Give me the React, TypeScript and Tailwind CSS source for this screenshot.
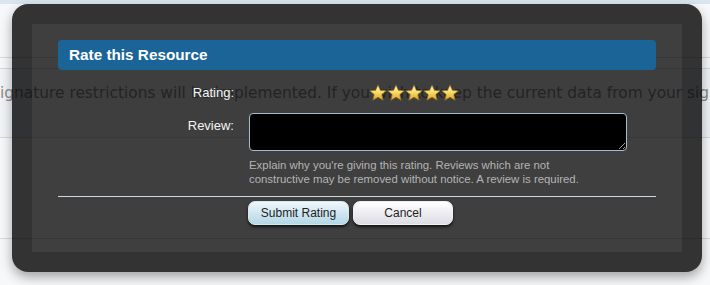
import React from 'react';

function Star() {
  return (
    <svg width="18" height="18" viewBox="0 0 24 24">
      <defs>
        <linearGradient id="starFill" x1="0" y1="0" x2="0" y2="1">
          <stop offset="0" stopColor="#fffbd8" />
          <stop offset="0.5" stopColor="#f8da62" />
          <stop offset="1" stopColor="#dca226" />
        </linearGradient>
      </defs>
      <path
        d="M12 1.2l3.2 7.2 7.8.6-5.9 5.1 1.8 7.7L12 17.8l-6.9 4 1.8-7.7L1 9l7.8-.6z"
        fill="url(#starFill)"
        stroke="#8a6414"
        strokeWidth="0.9"
        strokeLinejoin="round"
      />
    </svg>
  );
}

function BackgroundPage() {
  return (
    <div className="h-[285px] w-[710px] bg-[#f7f8f9] overflow-hidden font-['DejaVu_Sans',sans-serif]">
      <div className="h-[4px] bg-[#d9e6ef]" />
      <div className="h-[53px]" />
      <div className="h-[11px] border-t border-[#d6d9dc]" />
      <div className="h-[69px] border-t border-[#d6d9dc] bg-[#f1f4f7] pt-[15px]">
        <div className="ml-[-8px] whitespace-nowrap text-[15.4px] leading-[18px] text-[#8a8a8a]">
          signature restrictions will be implemented. If you wish to keep the current data from your signature
        </div>
      </div>
      <div className="h-[101px] border-t border-[#d6d9dc]" />
      <div className="border-t border-[#d6d9dc]" />
    </div>
  );
}

export default function App() {
  return (
    <div className="relative h-[285px] w-[710px] overflow-hidden">
      <BackgroundPage />

      <div className="absolute left-[12px] top-[4px] h-[268px] w-[690px] rounded-[16px] border-[20px] border-[rgba(0,0,0,0.2)] bg-[rgba(0,0,0,0.745)] bg-clip-border shadow-[0_5px_12px_rgba(0,0,0,0.35)] font-['Liberation_Sans',Arial,sans-serif]">
        <div className="flex flex-col px-[26px] pt-[16px]">
          <div className="flex h-[30px] items-center rounded-[4px] bg-[#1b6498] pl-[11px] text-[15.3px] font-bold text-white">
            Rate this Resource
          </div>

          <div className="mt-[14px] flex h-[18px] items-center">
            <div className="w-[176px] text-right text-[13px] text-[#f4f4f4]">Rating:</div>
            <div className="ml-[135px] flex">
              <Star />
              <Star />
              <Star />
              <Star />
              <Star />
            </div>
          </div>

          <div className="mt-[11px] flex">
            <div className="w-[176px] pt-[5px] text-right text-[13px] leading-[16px] text-[#f4f4f4]">Review:</div>
            <div className="ml-[15px] flex flex-col">
              <textarea className="h-[38px] w-[378px] rounded-[4px] border border-[#a9bccb] bg-black text-white outline-none" />
              <div className="mt-[7px] text-[11.4px] leading-[14px] text-[#b4b4b4]">
                Explain why you're giving this rating. Reviews which are not
                <br />
                constructive may be removed without notice. A review is required.
              </div>
            </div>
          </div>

          <div className="mt-[10px] h-px bg-[#c9d9e2]" />

          <div className="ml-[190px] mt-[4px] flex gap-[4px]">
            <button className="h-[24px] w-[101px] rounded-[7px] border border-[#d8e8f0] bg-gradient-to-b from-[#eef7fb] to-[#b3d7e6] text-[12px] text-[#1e1e1e] shadow-[0_2px_3px_rgba(0,0,0,0.7)]">
              Submit Rating
            </button>
            <button className="h-[24px] w-[100px] rounded-[7px] border border-[#f2f2f6] bg-gradient-to-b from-[#ffffff] to-[#dcdce4] text-[12px] text-[#1e1e1e] shadow-[0_2px_3px_rgba(0,0,0,0.7)]">
              Cancel
            </button>
          </div>
        </div>
      </div>
    </div>
  );
}
